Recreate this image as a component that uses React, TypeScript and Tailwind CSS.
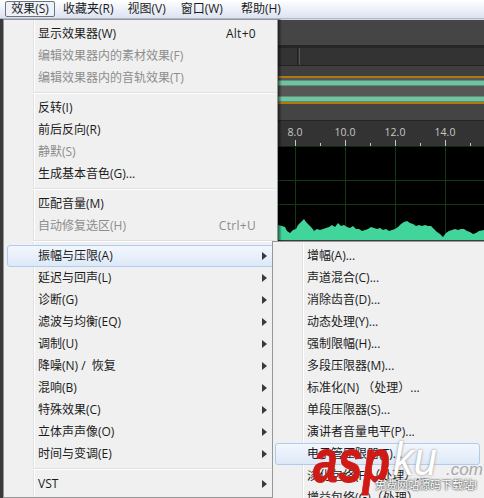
const font = { fontFamily: '"Open Sans","Noto Sans CJK SC",sans-serif' };

type Item =
  | { sep: true }
  | { label: string; shortcut?: string; disabled?: boolean; arrow?: boolean; active?: boolean };

const mainItems: Item[] = [
  { label: "显示效果器(W)", shortcut: "Alt+0" },
  { label: "编辑效果器内的素材效果(F)", disabled: true },
  { label: "编辑效果器内的音轨效果(T)", disabled: true },
  { sep: true },
  { label: "反转(I)" },
  { label: "前后反向(R)" },
  { label: "静默(S)", disabled: true },
  { label: "生成基本音色(G)..." },
  { sep: true },
  { label: "匹配音量(M)" },
  { label: "自动修复选区(H)", shortcut: "Ctrl+U", disabled: true },
  { sep: true },
  { label: "振幅与压限(A)", arrow: true, active: true },
  { label: "延迟与回声(L)", arrow: true },
  { label: "诊断(G)", arrow: true },
  { label: "滤波与均衡(EQ)", arrow: true },
  { label: "调制(U)", arrow: true },
  { label: "降噪(N)\u00a0/\u00a0\u00a0恢复", arrow: true },
  { label: "混响(B)", arrow: true },
  { label: "特殊效果(C)", arrow: true },
  { label: "立体声声像(O)", arrow: true },
  { label: "时间与变调(E)", arrow: true },
  { sep: true },
  { label: "VST", arrow: true },
];

const subItems: Item[] = [
  { label: "增幅(A)..." },
  { label: "声道混合(C)..." },
  { label: "消除齿音(D)..." },
  { label: "动态处理(Y)..." },
  { label: "强制限幅(H)..." },
  { label: "多段压限器(M)..." },
  { label: "标准化(N) （处理）..." },
  { label: "单段压限器(S)..." },
  { label: "演讲者音量电平(P)..." },
  { label: "电子管压限器(T)...", active: true },
  { label: "淡化包络(F)（处理）..." },
  { label: "增益包络(G)（处理）..." },
];

function Rows({ items, textLeft, left, right }: { items: Item[]; textLeft: string; left: string; right: string }) {
  return (
    <>
      {items.map((it, i) =>
        "sep" in it ? (
          <div key={i} className="h-[8px] flex items-center ml-[29px] mr-[2px]">
            <div className="h-[2px] w-full bg-[#dfdfdf] border-b border-white" />
          </div>
        ) : (
          <div
            key={i}
            className={
              "relative h-[22px] flex items-center text-[12px] leading-none whitespace-nowrap " +
              textLeft +
              " " +
              (it.disabled ? "text-[#8d8d8d]" : "text-[#1b1b1b]")
            }
          >
            {it.active && (
              <div className="absolute top-[0px] bottom-[0px] rounded-[3px] border border-[#aeccf1] bg-gradient-to-b from-[#f3f7fd] to-[#dde9f8]" style={{ left, right }} />
            )}
            <span className="relative">{it.label}</span>
            {it.shortcut && <span className="absolute right-[21px] tracking-[0.3px]">{it.shortcut}</span>}
            {it.arrow && (
              <svg className="absolute right-[10px]" width="5" height="8" viewBox="0 0 5 8">
                <path d="M0 0L5 4L0 8Z" fill="#3a3a3a" />
              </svg>
            )}
          </div>
        )
      )}
    </>
  );
}

const wave =
  "278,240 278,225 282,226 285,227 287,231 290,233 293,230 296,229 298,225 301,222 304,219 306,222 309,225 312,228 314,231 317,229 320,230 323,229 326,228 329,227 332,225 335,227 338,223 341,226 344,225 347,227 350,228 353,226 356,229 359,229 362,231 365,230 368,229 371,227 374,228 377,229 380,228 383,230 386,229 389,231 392,230 395,229 398,227 401,224 404,222 407,221 410,223 413,224 416,226 419,225 422,226 425,225 428,226 431,226 434,229 437,232 440,234 443,237 446,233 449,231 452,230 455,229 458,230 461,229 464,229 467,231 470,232 473,234 476,233 479,231 484,230 484,240";

const latin = { fontFamily: '"Liberation Sans",sans-serif' };

export default function App() {
  return (
    <div className="relative w-[484px] h-[498px] overflow-hidden bg-[#3a3a3a]" style={font}>
      {/* Menu bar */}
      <div className="h-[19px] flex items-center pl-[5px] text-[12px] leading-none text-[#1b1b1b] bg-gradient-to-b from-[#ffffff] to-[#dce3f1] border-b border-[#b4b8c6] whitespace-nowrap">
        <div className="h-[16px] w-[50px] flex items-center justify-center rounded-[2px] border border-[#6d7380] bg-[#eef1f7]">效果(S)</div>
        <span className="ml-[8px]">收藏夹(R)</span>
        <span className="ml-[14px]">视图(V)</span>
        <span className="ml-[15px]">窗口(W)</span>
        <span className="ml-[18px]">帮助(H)</span>
      </div>

      {/* App behind the menu */}
      <div className="ml-[278px] h-[479px] flex flex-col bg-[#3c3c3c] border-t border-[#d9d9d9]">
        <div className="h-[25px] bg-[#454545]" />
        <div className="h-[3px] bg-[#262626]" />
        <div className="h-[18px] flex bg-[#333333] border-b border-[#222222]">
          <div className="w-[20px] border-r border-[#222222]" />
          <div className="w-[1px] ml-[1px] bg-[#555555]" />
        </div>
        <div className="h-[10px] bg-[#3f3f3f]" />
        <div className="h-[28px] flex flex-col pt-[2px] gap-[10px] bg-[#565656] border-y-2 border-[#b07a10]">
          <div className="h-[6px] bg-[#6fc3a0] border-y border-[#5c8f7b]" />
          <div className="h-[6px] bg-[#6fc3a0] border-y border-[#5c8f7b]" />
        </div>
        <div className="h-[17px] bg-[#444444] border-b border-[#242424]" />
        <div className="relative h-[25px] bg-[#333333]">
          {["8.0", "10.0", "12.0", "14.0"].map((t, i) => (
            <div key={t} className="absolute top-0 h-full" style={{ left: 17 + i * 50 }}>
              <span className="absolute top-[6px] left-0 -translate-x-1/2 text-[10.5px] leading-none text-[#c8c8c8]">{t}</span>
              <div className="absolute bottom-0 left-0 h-[6px] w-px bg-[#c8c8c8]" />
              <div className="absolute bottom-0 left-[25px] h-[3px] w-px bg-[#c8c8c8]" />
            </div>
          ))}
        </div>
        <div className="relative h-[94px] bg-black border-t border-[#0f2a0f]">
          {[0, 1, 2, 3].map((i) => (
            <div key={i} className="absolute top-0 bottom-0 w-px bg-[#123a12]" style={{ left: 17 + i * 50 }} />
          ))}
          <div className="absolute left-0 right-0 top-[33px] h-px bg-[#123a12]" />
          <div className="absolute left-0 right-0 top-[57px] h-px bg-[#123a12]" />
        </div>
      </div>
      <svg className="absolute left-0 top-0 pointer-events-none" width="484" height="240" viewBox="0 0 484 240">
        <polygon points={wave} fill="#42d59b" />
      </svg>
      <div className="absolute left-[278px] top-[19px] h-[222px] w-[4px] bg-gradient-to-r from-[#00000088] to-transparent" />

      {/* Main menu */}
      <div className="absolute left-[3px] top-[19px] w-[275px] h-[479px] bg-[#f0f0f0] border border-[#979797]">
        <div className="absolute left-[29px] top-0 bottom-0 w-[2px] bg-[#e2e2e2] border-r border-white" />
        <div className="relative pt-[3px]">
          <Rows items={mainItems} textLeft="pl-[34px]" left="3px" right="2px" />
        </div>
      </div>

      {/* Sub menu */}
      <div className="absolute left-[272px] top-[241px] w-[214px] h-[260px] bg-[#f0f0f0] border border-[#979797]">
        <div className="absolute left-[29px] top-0 bottom-0 w-[2px] bg-[#e2e2e2] border-r border-white" />
        <div className="relative pt-[3px]">
          <Rows items={subItems} textLeft="pl-[34px]" left="2px" right="5px" />
        </div>
      </div>

      {/* Watermark */}
      <div className="absolute left-[313px] top-[430px] origin-left scale-x-[0.72] text-[62px] leading-none font-bold italic text-[#d01a16] [-webkit-text-stroke:1px_#d01a16]" style={latin}>asp</div>
      <div className="absolute left-[393px] top-[436px] origin-left scale-x-[0.9] text-[46px] leading-none italic text-white" style={{ ...latin, textShadow: "0 0 3px #888" }}>ku</div>
      <div className="absolute left-[446px] top-[461px] text-[17px] leading-none italic text-[#a8a8a8]" style={latin}>.com</div>
      <div className="absolute left-[375px] top-[479px] text-[11px] leading-none text-white whitespace-nowrap" style={{ textShadow: "0 0 2px #444, 0 0 2px #444" }}>免费网站源码下载站!</div>
    </div>
  );
}
